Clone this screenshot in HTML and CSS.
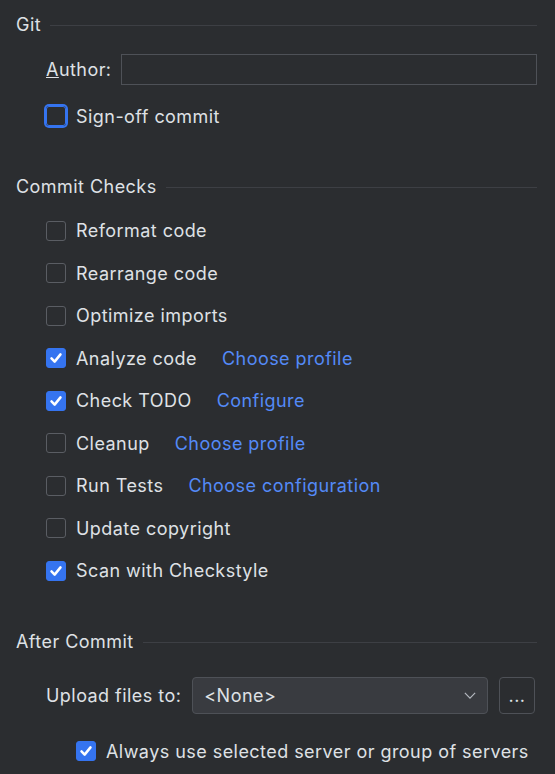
FILE: index.html
```html
<!DOCTYPE html>
<html>
<head>
<meta charset="utf-8">
<link rel="stylesheet" href="styles.css">
</head>
<body>
<div class="page">
  <div class="group-title git-title"><span>Git</span><div class="sep"></div></div>
  <div class="field-row author-row">
    <label class="label"><u>A</u>uthor:</label>
    <div class="text-input"></div>
  </div>
  <div class="check-row signoff-row">
    <span class="cb focused"></span><span class="text">Sign-off commit</span>
  </div>

  <div class="group-title checks-title"><span>Commit Checks</span><div class="sep"></div></div>
  <div class="checks">
    <div class="check-row"><span class="cb"></span><span class="text">Reformat code</span></div>
    <div class="check-row"><span class="cb"></span><span class="text">Rearrange code</span></div>
    <div class="check-row"><span class="cb"></span><span class="text">Optimize imports</span></div>
    <div class="check-row"><span class="cb on"><svg viewBox="0 0 20 20"><path d="M5 10.5 L8.5 14 L15 6"/></svg></span><span class="text">Analyze code</span><a class="link">Choose profile</a></div>
    <div class="check-row"><span class="cb on"><svg viewBox="0 0 20 20"><path d="M5 10.5 L8.5 14 L15 6"/></svg></span><span class="text">Check TODO</span><a class="link">Configure</a></div>
    <div class="check-row"><span class="cb"></span><span class="text">Cleanup</span><a class="link">Choose profile</a></div>
    <div class="check-row"><span class="cb"></span><span class="text">Run Tests</span><a class="link">Choose configuration</a></div>
    <div class="check-row"><span class="cb"></span><span class="text">Update copyright</span></div>
    <div class="check-row"><span class="cb on"><svg viewBox="0 0 20 20"><path d="M5 10.5 L8.5 14 L15 6"/></svg></span><span class="text">Scan with Checkstyle</span></div>
  </div>

  <div class="group-title after-title"><span>After Commit</span><div class="sep"></div></div>
  <div class="field-row upload-row">
    <span class="label">Upload files to:</span>
    <div class="combo"><span>&lt;None&gt;</span><svg class="chev" viewBox="0 0 14 8"><path d="M1 1 L7 7 L13 1"/></svg></div>
    <div class="dots-btn">...</div>
  </div>
  <div class="check-row always-row">
    <span class="cb on"><svg viewBox="0 0 20 20"><path d="M5 10.5 L8.5 14 L15 6"/></svg></span><span class="text">Always use selected server or group of servers</span>
  </div>
</div>
</body>
</html>
```

FILE: styles.css
```css
html, body {
  margin: 0;
  padding: 0;
  background: #2b2d30;
}
body {
  font-family: Inter, "Noto Sans", sans-serif;
  font-size: 18px;
  letter-spacing: 0.45px;
  color: #dfe1e5;
  width: 555px;
  height: 774px;
  overflow: hidden;
}
.page {
  display: flex;
  flex-direction: column;
  padding: 12px 18px 0 16px;
}
.group-title {
  display: flex;
  align-items: center;
  gap: 9px;
  height: 24px;
}
.sep {
  flex: 1;
  height: 1px;
  background: #3d3f44;
  margin-top: 2px;
}
.field-row {
  display: flex;
  align-items: center;
  padding-left: 30px;
}
.author-row {
  margin-top: 17px;
  height: 32px;
  gap: 9px;
}
.text-input {
  flex: 1;
  height: 29px;
  border: 1px solid #4e5157;
  background: #2b2d30;
}
.check-row {
  display: flex;
  align-items: center;
  padding-left: 30px;
  height: 42.5px;
}
.signoff-row {
  margin-top: 10px;
}
.cb {
  width: 18px;
  height: 18px;
  border: 1px solid #5a5d63;
  border-radius: 3px;
  box-sizing: content-box;
  flex: none;
  margin-right: 10px;
  display: flex;
}
.cb.focused {
  border-color: #3574f0;
  box-shadow: 0 0 0 2px #3574f0;
  border-radius: 3px;
}
.cb.on {
  background: #3574f0;
  border-color: #3574f0;
}
.cb svg {
  width: 18px;
  height: 18px;
}
.cb svg path {
  fill: none;
  stroke: #ffffff;
  stroke-width: 2.8;
  stroke-linecap: round;
  stroke-linejoin: round;
}
.link {
  color: #548af7;
  margin-left: 25px;
}
.checks-title {
  margin-top: 37px;
}
.checks {
  display: flex;
  flex-direction: column;
  margin-top: 11px;
}
.after-title {
  margin-top: 37px;
}
.upload-row {
  margin-top: 24px;
  margin-right: 2px;
  height: 37px;
  gap: 11px;
}
.combo {
  flex: 1;
  height: 35px;
  border: 1px solid #4e5157;
  border-radius: 4px;
  background: #393b40;
  display: flex;
  align-items: center;
  justify-content: space-between;
  padding: 0 11px 0 11px;
  box-sizing: content-box;
}
.chev {
  width: 12px;
  height: 7px;
}
.chev path {
  fill: none;
  stroke: #b4b8bf;
  stroke-width: 1.4;
}
.dots-btn {
  width: 34px;
  height: 35px;
  border: 1px solid #4e5157;
  border-radius: 4px;
  display: flex;
  align-items: center;
  justify-content: center;
  box-sizing: content-box;
  line-height: 1;
  flex: none;
}
.always-row {
  margin-top: 16px;
  padding-left: 60px;
}
```
